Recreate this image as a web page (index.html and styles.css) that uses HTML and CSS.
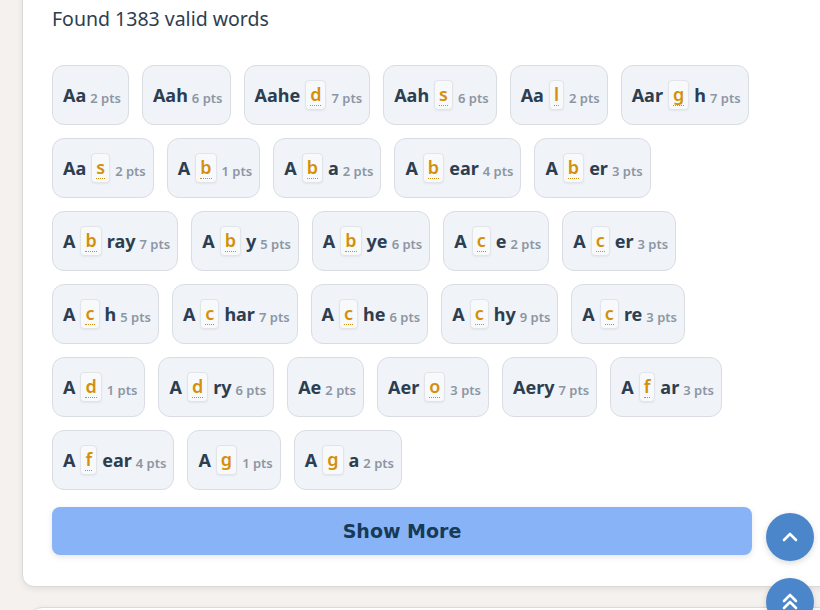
FILE: index.html
```html
<!DOCTYPE html>
<html>
<head>
<meta charset="utf-8">
<link rel="stylesheet" href="styles.css">
</head>
<body>
<div class="page">
  <section class="card">
    <p class="found">Found 1383 valid words</p>
    <div class="chips">
      <div class="chip"><span class="w">Aa</span><span class="pts">2 pts</span></div>
      <div class="chip"><span class="w">Aah</span><span class="pts">6 pts</span></div>
      <div class="chip"><span class="w">Aahe</span><span class="box"><span class="l">d</span></span><span class="pts">7 pts</span></div>
      <div class="chip"><span class="w">Aah</span><span class="box"><span class="l">s</span></span><span class="pts">6 pts</span></div>
      <div class="chip"><span class="w">Aa</span><span class="box"><span class="l">l</span></span><span class="pts">2 pts</span></div>
      <div class="chip"><span class="w">Aar</span><span class="box"><span class="l">g</span></span><span class="w">h</span><span class="pts">7 pts</span></div>

      <div class="chip"><span class="w">Aa</span><span class="box"><span class="l">s</span></span><span class="pts">2 pts</span></div>
      <div class="chip"><span class="w">A</span><span class="box"><span class="l">b</span></span><span class="pts">1 pts</span></div>
      <div class="chip"><span class="w">A</span><span class="box"><span class="l">b</span></span><span class="w">a</span><span class="pts">2 pts</span></div>
      <div class="chip"><span class="w">A</span><span class="box"><span class="l">b</span></span><span class="w">ear</span><span class="pts">4 pts</span></div>
      <div class="chip"><span class="w">A</span><span class="box"><span class="l">b</span></span><span class="w">er</span><span class="pts">3 pts</span></div>

      <div class="chip"><span class="w">A</span><span class="box"><span class="l">b</span></span><span class="w">ray</span><span class="pts">7 pts</span></div>
      <div class="chip"><span class="w">A</span><span class="box"><span class="l">b</span></span><span class="w">y</span><span class="pts">5 pts</span></div>
      <div class="chip"><span class="w">A</span><span class="box"><span class="l">b</span></span><span class="w">ye</span><span class="pts">6 pts</span></div>
      <div class="chip"><span class="w">A</span><span class="box"><span class="l">c</span></span><span class="w">e</span><span class="pts">2 pts</span></div>
      <div class="chip"><span class="w">A</span><span class="box"><span class="l">c</span></span><span class="w">er</span><span class="pts">3 pts</span></div>

      <div class="chip"><span class="w">A</span><span class="box"><span class="l">c</span></span><span class="w">h</span><span class="pts">5 pts</span></div>
      <div class="chip"><span class="w">A</span><span class="box"><span class="l">c</span></span><span class="w">har</span><span class="pts">7 pts</span></div>
      <div class="chip"><span class="w">A</span><span class="box"><span class="l">c</span></span><span class="w">he</span><span class="pts">6 pts</span></div>
      <div class="chip"><span class="w">A</span><span class="box"><span class="l">c</span></span><span class="w">hy</span><span class="pts">9 pts</span></div>
      <div class="chip"><span class="w">A</span><span class="box"><span class="l">c</span></span><span class="w">re</span><span class="pts">3 pts</span></div>

      <div class="chip"><span class="w">A</span><span class="box"><span class="l">d</span></span><span class="pts">1 pts</span></div>
      <div class="chip"><span class="w">A</span><span class="box"><span class="l">d</span></span><span class="w">ry</span><span class="pts">6 pts</span></div>
      <div class="chip"><span class="w">Ae</span><span class="pts">2 pts</span></div>
      <div class="chip"><span class="w">Aer</span><span class="box"><span class="l">o</span></span><span class="pts">3 pts</span></div>
      <div class="chip"><span class="w">Aery</span><span class="pts">7 pts</span></div>
      <div class="chip"><span class="w">A</span><span class="box"><span class="l">f</span></span><span class="w">ar</span><span class="pts">3 pts</span></div>

      <div class="chip"><span class="w">A</span><span class="box"><span class="l">f</span></span><span class="w">ear</span><span class="pts">4 pts</span></div>
      <div class="chip"><span class="w">A</span><span class="box"><span class="l nodot">g</span></span><span class="pts">1 pts</span></div>
      <div class="chip"><span class="w">A</span><span class="box"><span class="l nodot">g</span></span><span class="w">a</span><span class="pts">2 pts</span></div>
    </div>
    <button class="more">Show More</button>
  </section>
  <section class="card next"></section>
</div>
<div class="fab up">
  <svg width="20" height="20" viewBox="0 0 20 20"><path d="M4 13 L10 7 L16 13" fill="none" stroke="#fff" stroke-width="2.6" stroke-linecap="round" stroke-linejoin="round"/></svg>
</div>
<div class="fab top">
  <svg width="20" height="24" viewBox="0 0 20 24"><path d="M4 11 L10 5 L16 11 M4 18 L10 12 L16 18" fill="none" stroke="#fff" stroke-width="2.6" stroke-linecap="round" stroke-linejoin="round"/></svg>
</div>
</body>
</html>
```
FILE: styles.css
```css
html, body {
  margin: 0;
  padding: 0;
  background: #f4f1ee;
  overflow: hidden;
}
body {
  font-family: "Noto Sans", sans-serif;
  color: #2c3e50;
}
.page {
  padding: 0 38px 0 22px;
  margin-top: -30px;
}
.card {
  background: #fff;
  border: 1px solid #dcdad8;
  border-radius: 12px;
  box-shadow: 0 2px 6px rgba(0,0,0,0.08);
  padding: 30px 29px 31px 29px;
  width: 758px;
}
.card.next {
  margin-top: 20px;
  height: 60px;
  margin-left: 8px;
  width: 742px;
}
.found {
  margin: 0 0 28px 0;
  font-size: 19.5px;
  line-height: 36px;
  color: #2c3e50;
}
.chips {
  display: flex;
  flex-wrap: wrap;
  gap: 13px 13px;
  width: 700px;
}
.chip {
  display: flex;
  align-items: center;
  gap: 4px;
  height: 58px;
  padding: 0 7px 0 10px;
  background: #f0f3f8;
  border: 1px solid #d9dde3;
  border-radius: 12px;
  box-sizing: content-box;
}
.w {
  font-size: 18px;
  font-weight: 700;
  color: #2c3e50;
  line-height: 30px;
}
.pts {
  font-size: 13px;
  font-weight: 600;
  color: #8c96a3;
  margin-top: 5px;
}
.box {
  display: flex;
  align-items: center;
  justify-content: center;
  padding: 0 4px;
  height: 28px;
  background: #f8f9fb;
  border: 1px solid #e1e5ea;
  border-radius: 4px;
  box-shadow: 0 1px 2px rgba(0,0,0,0.06);
  margin: 0 1px;
}
.l {
  font-size: 18px;
  font-weight: 600;
  color: #d4900a;
  line-height: 20px;
  border-bottom: 1px dotted #d4900a;
  padding-bottom: 1px;
}
.l.nodot {
  border-bottom-color: transparent;
}
.more {
  display: block;
  margin-top: 17px;
  width: 700px;
  height: 48px;
  border: none;
  border-radius: 8px;
  background: #89b3f7;
  color: #173a57;
  font-family: "DejaVu Sans", sans-serif;
  font-weight: 700;
  font-size: 19px;
  box-shadow: 0 2px 6px rgba(0,0,0,0.1);
}
.fab {
  position: fixed;
  left: 766px;
  width: 48px;
  height: 48px;
  border-radius: 50%;
  background: #4a86c9;
  display: flex;
  align-items: center;
  justify-content: center;
  box-shadow: 0 2px 6px rgba(0,0,0,0.15);
}
.fab.up { top: 513px; }
.fab.top { top: 578px; }
```
